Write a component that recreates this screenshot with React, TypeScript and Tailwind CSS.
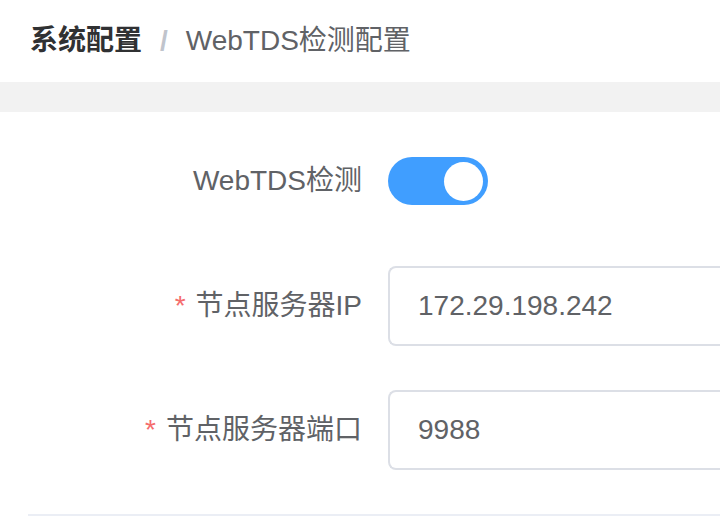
import { useState } from 'react';

const font = { fontFamily: '"Liberation Sans", "Noto Sans CJK SC", sans-serif' };

function FormRow({
  label,
  required,
  children,
}: {
  label: string;
  required?: boolean;
  children: React.ReactNode;
}) {
  return (
    <div className="flex items-center">
      <label className="w-[388px] shrink-0 pr-[26px] text-right text-[28px] text-[#606266]">
        {required && <span className="mr-[10px] text-[#f56c6c]">*</span>}
        {label}
      </label>
      <div className="flex-1">{children}</div>
    </div>
  );
}

export default function App() {
  const [enabled, setEnabled] = useState(true);
  const [ip, setIp] = useState('172.29.198.242');
  const [port, setPort] = useState('9988');

  return (
    <div className="w-[720px] h-[516px] overflow-hidden bg-white" style={font}>
      {/* 面包屑 */}
      <div className="flex h-[82px] items-center px-[30px] text-[28px]">
        <span className="font-bold text-[#303133]">系统配置</span>
        <span className="mx-[18px] font-bold text-[#c0c4cc]">/</span>
        <span className="text-[#606266]">WebTDS检测配置</span>
      </div>
      <div className="h-[30px] bg-[#f2f2f2]" />

      <div className="pt-[45px]">
        <FormRow label="WebTDS检测">
          <button
            type="button"
            onClick={() => setEnabled(!enabled)}
            className={`flex h-[48px] w-[100px] items-center rounded-full px-[5px] ${
              enabled ? 'justify-end bg-[#409eff]' : 'justify-start bg-[#dcdfe6]'
            }`}
          >
            <span className="block h-[39px] w-[39px] rounded-full bg-white" />
          </button>
        </FormRow>

        <div className="mt-[61px] flex flex-col gap-[44px]">
          <FormRow label="节点服务器IP" required>
            <input
              className="h-[80px] w-full rounded-l-[8px] border-2 border-r-0 border-[#dcdfe6] px-[28px] text-[28px] text-[#606266] outline-none"
              value={ip}
              onChange={(e) => setIp(e.target.value)}
            />
          </FormRow>
          <FormRow label="节点服务器端口" required>
            <input
              className="h-[80px] w-full rounded-l-[8px] border-2 border-r-0 border-[#dcdfe6] px-[28px] text-[28px] text-[#606266] outline-none"
              value={port}
              onChange={(e) => setPort(e.target.value)}
            />
          </FormRow>
        </div>

        <div className="ml-[28px] mt-[44px] border-t-2 border-[#ebeef5]" />
      </div>
    </div>
  );
}
